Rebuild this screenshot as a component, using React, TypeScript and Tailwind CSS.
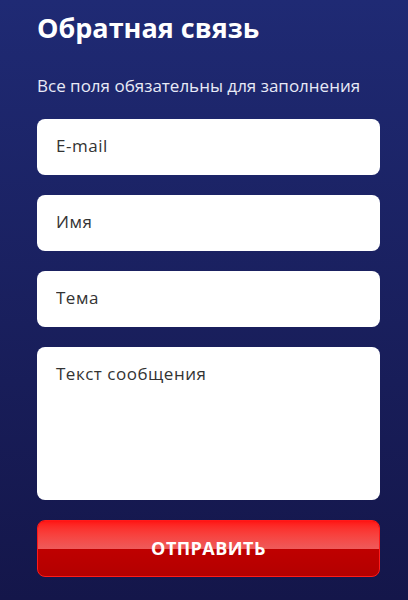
import React from 'react';

const fieldClass =
  'w-full rounded-lg bg-white px-[19px] text-[17px] leading-[24px] tracking-[0.03em] text-[#333] placeholder:text-[#333] outline-none';

export default function App() {
  return (
    <div
      className="min-h-[600px] w-full bg-gradient-to-b from-[#1f2a74] to-[#14164a] pl-[37px] pr-[28px] pt-[10px] pb-[23px]"
      style={{ fontFamily: '"Open Sans", "Noto Sans", sans-serif' }}
    >
      <h1 className="text-[27px] font-bold leading-[36px] text-white">Обратная связь</h1>
      <p className="mt-[28px] text-[17px] leading-[24px] text-[#e8eaf6]">
        Все поля обязательны для заполнения
      </p>
      <form className="mt-[21px] flex flex-col gap-[20px]" onSubmit={(e) => e.preventDefault()}>
        <input className={`${fieldClass} h-[56px] pt-[12px] pb-[16px]`} placeholder="E-mail" />
        <input className={`${fieldClass} h-[56px] pt-[12px] pb-[16px]`} placeholder="Имя" />
        <input className={`${fieldClass} h-[56px] pt-[12px] pb-[16px]`} placeholder="Тема" />
        <textarea className={`${fieldClass} h-[153px] resize-none pt-[15px] pb-[13px]`} placeholder="Текст сообщения" />
        <button
          type="submit"
          className="relative h-[57px] w-full overflow-hidden rounded-lg border border-[#ff1a1a] bg-gradient-to-b from-[#cc0000] to-[#b30000] text-[18px] font-bold uppercase tracking-wide text-white"
        >
          <span className="absolute inset-x-0 top-0 h-1/2 bg-gradient-to-b from-[#ff1212] to-[#ee5a5a]" />
          <span className="relative">Отправить</span>
        </button>
      </form>
    </div>
  );
}
